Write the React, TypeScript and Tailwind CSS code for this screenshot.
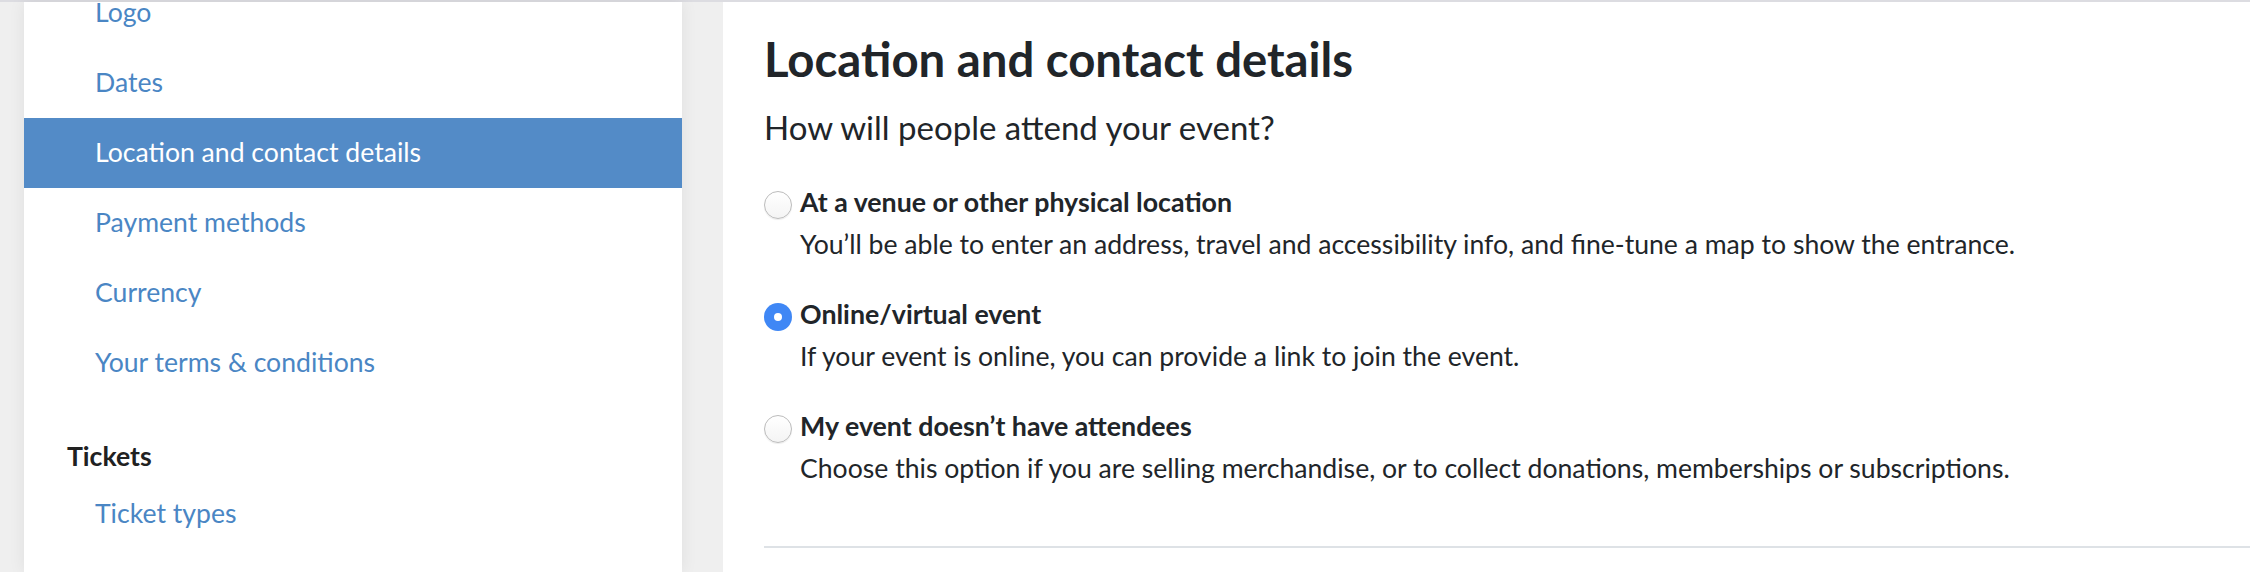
const navItems = [
  'Logo',
  'Dates',
  'Location and contact details',
  'Payment methods',
  'Currency',
  'Your terms & conditions',
]

const options = [
  {
    id: 'venue',
    label: 'At a venue or other physical location',
    help: 'You’ll be able to enter an address, travel and accessibility info, and fine-tune a map to show the entrance.',
  },
  {
    id: 'online',
    label: 'Online/virtual event',
    help: 'If your event is online, you can provide a link to join the event.',
  },
  {
    id: 'none',
    label: 'My event doesn’t have attendees',
    help: 'Choose this option if you are selling merchandise, or to collect donations, memberships or subscriptions.',
  },
]

function NavLink({ label, active }: { label: string; active?: boolean }) {
  return (
    <a
      href="#"
      className={`block h-[70px] pl-[71px] pt-[13px] text-[26.6px] leading-[42px] ${
        active ? 'bg-[#538bc7] text-white' : 'text-[#4a86c4]'
      }`}
    >
      {label}
    </a>
  )
}

function Radio({ checked }: { checked?: boolean }) {
  if (checked) {
    return (
      <span className="mt-[10px] flex h-[28px] w-[28px] shrink-0 items-center justify-center rounded-full bg-[#3f87f5]">
        <span className="h-[8px] w-[8px] rounded-full bg-white" />
      </span>
    )
  }
  return (
    <span className="mt-[10px] h-[28px] w-[28px] shrink-0 rounded-full border-[1.5px] border-[#bcbcbc] bg-gradient-to-b from-white to-[#f4f4f4] shadow-[0_1px_1px_rgba(0,0,0,0.08)]" />
  )
}

export default function App() {
  const selected = 'online'

  return (
    <div className="h-[572px] overflow-hidden bg-[#efefef] font-['Lato',sans-serif] text-[#212529]">
      <div className="h-[2px] bg-[#dcdce1]" />
      <div className="flex h-[570px] gap-[41px] pl-[24px]">
        <aside className="relative z-10 w-[658px] shrink-0 overflow-hidden bg-white shadow-[0_0_16px_rgba(0,0,0,0.07)]">
          <nav className="-mt-[24px]">
            {navItems.map((item) => (
              <NavLink key={item} label={item} active={item === 'Location and contact details'} />
            ))}
            <h3 className="pl-[43px] pt-[37px] pb-[2px] text-[26.6px] font-bold leading-[42px] text-[#212121]">
              Tickets
            </h3>
            <NavLink label="Ticket types" />
          </nav>
        </aside>

        <main className="flex-1 bg-white pl-[41px] pt-[28px]">
          <h2 className="text-[47.3px] font-bold leading-[57px]">Location and contact details</h2>
          <p className="mt-[15px] text-[33px] leading-[50px]">How will people attend your event?</p>

          <div className="mt-[28.5px] flex flex-col gap-[28px]">
            {options.map((o) => (
              <label key={o.id} className="flex items-start gap-[8px]">
                <Radio checked={o.id === selected} />
                <span className="flex flex-col">
                  <span className="text-[26.75px] font-bold leading-[42px]">{o.label}</span>
                  <span className="text-[26.6px] leading-[42px]">{o.help}</span>
                </span>
              </label>
            ))}
          </div>

          <div className="mt-[57.5px] h-[2px] bg-[#dee2e6]" />
        </main>
      </div>
    </div>
  )
}
